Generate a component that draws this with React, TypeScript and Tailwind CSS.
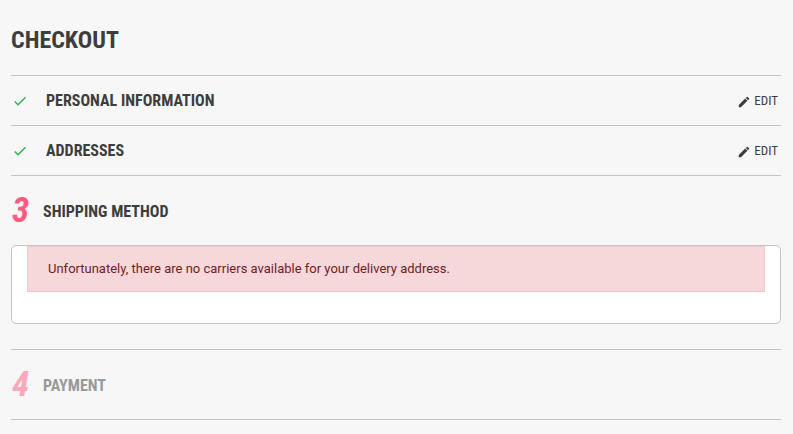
import type { ReactNode } from "react";

function CheckIcon() {
  return (
    <svg viewBox="0 0 24 24" className="ml-px h-4 w-4 shrink-0 fill-[#2fb04a]" aria-hidden="true">
      <path d="M9 16.2 4.8 12l-1.4 1.4L9 19 21 7l-1.4-1.4L9 16.2z" />
    </svg>
  );
}

function PencilIcon() {
  return (
    <svg viewBox="0 0 24 24" className="mt-0.5 h-3.5 w-3.5 fill-current" aria-hidden="true">
      <path d="M3 17.25V21h3.75L17.81 9.94l-3.75-3.75L3 17.25zM20.71 7.04a1 1 0 0 0 0-1.41l-2.34-2.34a1 1 0 0 0-1.41 0l-1.83 1.83 3.75 3.75 1.83-1.83z" />
    </svg>
  );
}

function StepTitle({ children }: { children: ReactNode }) {
  return <h2 className="text-base/[25px] font-bold uppercase">{children}</h2>;
}

function CompletedStep({ title }: { title: string }) {
  return (
    <section className="flex items-center border-b border-[#c5c5c5] py-3 pr-[3px]">
      <CheckIcon />
      <div className="ml-[18px] grow">
        <StepTitle>{title}</StepTitle>
      </div>
      <button
        type="button"
        className="flex items-center gap-[3px] text-[13px]/5 uppercase"
        aria-label={`Edit ${title}`}
      >
        <PencilIcon />
        Edit
      </button>
    </section>
  );
}

function StepHeading({ step, title }: { step: number; title: string }) {
  return (
    <div className="flex items-center">
      <span className="w-8 pl-px text-[35px]/9 font-bold italic text-[#ff5c7f]">{step}</span>
      <StepTitle>{title}</StepTitle>
    </div>
  );
}

export default function App() {
  return (
    <main className="min-h-screen bg-[#f7f7f7] pt-6 pr-3 pb-3.5 pl-[11px] font-['Roboto_Condensed','Roboto',sans-serif] text-[#3d3d3d]">
      <h1 className="border-b border-[#c5c5c5] pb-[19px] text-2xl/8 font-bold uppercase">Checkout</h1>

      <CompletedStep title="Personal Information" />
      <CompletedStep title="Addresses" />

      <section className="border-b border-[#c5c5c5] pt-[17px] pb-[25px]">
        <StepHeading step={3} title="Shipping Method" />
        <div className="mt-4 rounded-[5px] border border-[#c5c5c5] bg-white px-[15px] pb-[31px]">
          <p
            role="alert"
            className="border border-[#f5c6cb] bg-[#f6d7da] px-5 py-3 font-['Roboto',sans-serif] text-[13px]/5 text-[#721c24]"
          >
            Unfortunately, there are no carriers available for your delivery address.
          </p>
        </div>
      </section>

      <section className="border-b border-[#c5c5c5] pt-[17px] pb-4">
        <div className="opacity-50">
          <StepHeading step={4} title="Payment" />
        </div>
      </section>
    </main>
  );
}
